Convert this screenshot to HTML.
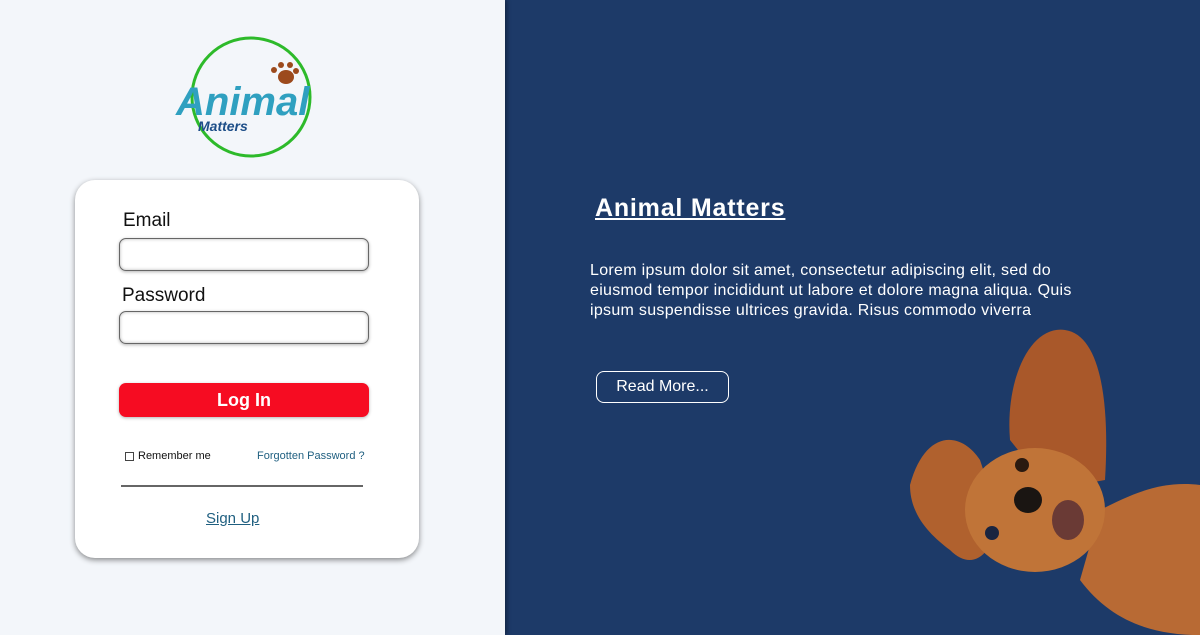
<!DOCTYPE html>
<html><head><style>
*{margin:0;padding:0;box-sizing:border-box}
body{width:1200px;height:635px;overflow:hidden;font-family:"Liberation Sans",sans-serif;position:relative;background:#1d3a68}
#left{position:absolute;left:0;top:0;width:505px;height:635px;background:#f3f6fa;box-shadow:2px 0 4px rgba(0,0,0,.35)}
#card{position:absolute;left:75px;top:180px;width:344px;height:378px;background:#fff;border-radius:20px;box-shadow:0 2px 6px rgba(0,0,0,.45)}
.lbl{position:absolute;font-size:19px;color:#111}
.inp{position:absolute;left:44px;width:250px;height:33px;border:1.5px solid #666;border-radius:7px;box-shadow:inset 0 0 3px rgba(0,0,0,.3),0 1px 3px rgba(0,0,0,.3)}
#btn{position:absolute;left:44px;top:203px;width:250px;height:34px;background:#f60c22;border-radius:7px;color:#fff;font-weight:bold;font-size:18px;text-align:center;line-height:34px;box-shadow:0 1px 3px rgba(0,0,0,.3)}
</style></head><body>
<div id="left">
<svg width="505" height="170" style="position:absolute;left:0;top:0">
<circle cx="251" cy="97" r="59" fill="none" stroke="#2dba2a" stroke-width="3"/>
<g fill="#9c4a1d"><ellipse cx="286" cy="77" rx="8" ry="7"/><circle cx="274" cy="70" r="3"/><circle cx="281" cy="65" r="3"/><circle cx="290" cy="65" r="3"/><circle cx="296" cy="71" r="3"/></g>
<text x="176" y="115" font-family="Liberation Sans" font-style="italic" font-weight="bold" font-size="40" fill="#2fa0c0">Animal</text>
<text x="198" y="131" font-family="Liberation Sans" font-style="italic" font-weight="bold" font-size="14" fill="#1d4e88">Matters</text>
</svg>
<div id="card">
<div class="lbl" style="left:48px;top:30px">Email</div>
<div class="inp" style="top:58px"></div>
<div class="lbl" style="left:47px;top:105px">Password</div>
<div class="inp" style="top:131px"></div>
<div id="btn">Log In</div>
<div style="position:absolute;left:50px;top:272px;width:9px;height:9px;border:1px solid #444"></div>
<div style="position:absolute;left:63px;top:270px;font-size:11px;color:#111">Remember me</div>
<div style="position:absolute;left:182px;top:270px;font-size:11px;color:#1f5f80">Forgotten Password ?</div>
<div style="position:absolute;left:46px;top:305px;width:242px;height:2px;background:#666"></div>
<div style="position:absolute;left:131px;top:330px;font-size:15px;color:#1f5f80;text-decoration:underline">Sign Up</div>
</div>
</div>
<div style="position:absolute;left:595px;top:194px;font-size:25px;font-weight:bold;color:#fff;text-decoration:underline;letter-spacing:0.8px">Animal Matters</div>
<div style="position:absolute;left:590px;top:261px;width:520px;font-size:16px;letter-spacing:0.3px;line-height:20px;color:#fff">Lorem ipsum dolor sit amet, consectetur adipiscing elit, sed do<br>eiusmod tempor incididunt ut labore et dolore magna aliqua. Quis<br>ipsum suspendisse ultrices gravida. Risus commodo viverra</div>
<div style="position:absolute;left:596px;top:371px;width:133px;height:32px;border:1.5px solid #fff;border-radius:8px;color:#fff;font-size:16px;text-align:center;line-height:29px">Read More...</div>
<svg width="320" height="315" style="position:absolute;left:880px;top:320px">
<path d="M320 165 C280 160 250 175 220 190 L200 260 C230 300 270 315 320 315 Z" fill="#b86a34"/>
<path d="M130 120 C125 60 150 5 185 10 C220 15 230 80 225 160 L170 170 Z" fill="#a9582a"/>
<path d="M30 165 C45 110 80 110 100 140 L120 200 C110 240 90 250 70 230 C50 215 30 195 30 165 Z" fill="#b0612e"/>
<ellipse cx="155" cy="190" rx="70" ry="62" fill="#c07438"/>
<ellipse cx="148" cy="180" rx="14" ry="13" fill="#1a1512"/>
<ellipse cx="188" cy="200" rx="16" ry="20" fill="#6a3a35"/>
<circle cx="142" cy="145" r="7" fill="#2a1a10"/>
<circle cx="112" cy="213" r="7" fill="#1a2540"/>
</svg>
</body></html>
